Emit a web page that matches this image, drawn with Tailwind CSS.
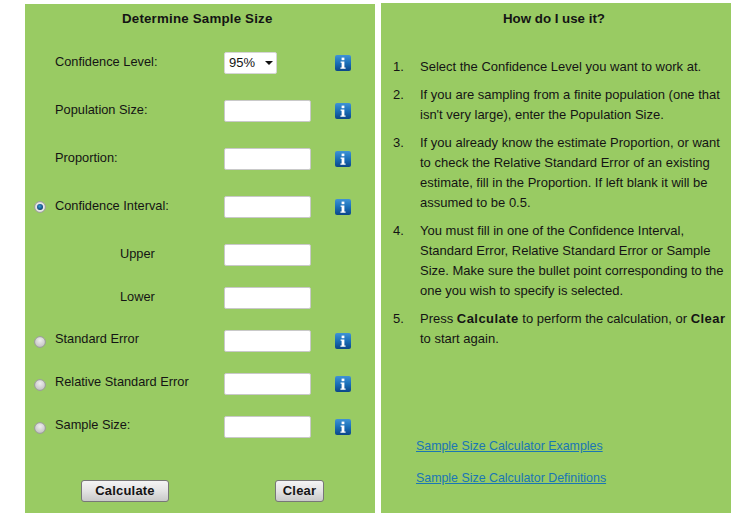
<!DOCTYPE html>
<html><head><meta charset="utf-8"><script src="https://cdn.jsdelivr.net/npm/@tailwindcss/browser@4"></script></head>
<body class="bg-white w-[756px] h-[525px] overflow-hidden font-['Liberation_Sans',Arial,sans-serif] text-[12.8px] text-[#141414]">
<svg class="absolute w-0 h-0"><defs>
<linearGradient id="ib" x1="0" y1="0" x2="0" y2="1"><stop offset="0" stop-color="#3f93d6"/><stop offset="0.5" stop-color="#1a6fb8"/><stop offset="1" stop-color="#0b4688"/></linearGradient>
<radialGradient id="rg" cx="0.5" cy="0.35" r="0.7"><stop offset="0" stop-color="#eeeeee"/><stop offset="1" stop-color="#bdbdbd"/></radialGradient>
<radialGradient id="rb" cx="0.45" cy="0.4" r="0.6"><stop offset="0" stop-color="#3a9ad8"/><stop offset="1" stop-color="#0b3f6e"/></radialGradient>
<symbol id="info" viewBox="0 0 16 16"><rect x="0" y="0" width="16" height="16" rx="2" fill="url(#ib)"/><rect x="6.6" y="2.6" width="2.8" height="2.6" fill="#fff"/><path d="M5.6 6.4h3.8v6h1.2v1.4H5.4v-1.4h1.2V7.8h-1z" fill="#fff"/></symbol>
<symbol id="off" viewBox="0 0 12 12"><circle cx="6" cy="6" r="5.4" fill="url(#rg)" stroke="#9a9a9a" stroke-width="1"/></symbol>
<symbol id="on" viewBox="0 0 12 12"><circle cx="6" cy="6" r="5.4" fill="#e6e6e6" stroke="#9a9a9a" stroke-width="1"/><circle cx="6" cy="6" r="3" fill="url(#rb)"/></symbol>
</defs></svg>

<div class="flex items-start">
  <form class="ml-[25px] mt-[4px] w-[350px] h-[509px] bg-[#99cb63] flex flex-col">
    <h2 class="h-[22px] pl-[97px] pt-[6px] font-bold text-[13.3px] leading-[18px] tracking-[0.2px]">Determine Sample Size</h2>

    <div class="mt-[26px] h-[22px] flex">
      <span class="w-[30px]"></span>
      <span class="w-[169px] leading-[19px]">Confidence Level:</span>
      <div class="w-[53px] h-[22px] bg-white border border-[#d5d5d5] rounded-[2px] pl-[4px] flex items-center text-[13px]">95%<svg class="ml-[10px]" width="8" height="4" viewBox="0 0 8 4"><path d="M0 0h8L4 4z" fill="#111"/></svg></div>
      <svg class="ml-[58px] mt-[3px]" width="16" height="16"><use href="#info"/></svg>
    </div>

    <div class="mt-[26px] h-[22px] flex">
      <span class="w-[30px]"></span>
      <span class="w-[169px] leading-[19px]">Population Size:</span>
      <div class="w-[87px] h-[22px] bg-white border border-[#c9c9c9] rounded-[2px]"></div>
      <svg class="ml-[24px] mt-[3px]" width="16" height="16"><use href="#info"/></svg>
    </div>

    <div class="mt-[26px] h-[22px] flex">
      <span class="w-[30px]"></span>
      <span class="w-[169px] leading-[19px]">Proportion:</span>
      <div class="w-[87px] h-[22px] bg-white border border-[#c9c9c9] rounded-[2px]"></div>
      <svg class="ml-[24px] mt-[3px]" width="16" height="16"><use href="#info"/></svg>
    </div>

    <div class="mt-[26px] h-[22px] flex">
      <span class="w-[30px] pl-[9px] pt-[5px]"><svg class="block" width="12" height="12"><use href="#on"/></svg></span>
      <span class="w-[169px] leading-[19px]">Confidence Interval:</span>
      <div class="w-[87px] h-[22px] bg-white border border-[#c9c9c9] rounded-[2px]"></div>
      <svg class="ml-[24px] mt-[3px]" width="16" height="16"><use href="#info"/></svg>
    </div>

    <div class="mt-[26px] h-[22px] flex">
      <span class="w-[199px] pl-[95px] leading-[19px]">Upper</span>
      <div class="w-[87px] h-[22px] bg-white border border-[#c9c9c9] rounded-[2px]"></div>
    </div>

    <div class="mt-[21px] h-[22px] flex">
      <span class="w-[199px] pl-[95px] leading-[19px]">Lower</span>
      <div class="w-[87px] h-[22px] bg-white border border-[#c9c9c9] rounded-[2px]"></div>
    </div>

    <div class="mt-[21px] h-[22px] flex">
      <span class="w-[30px] pl-[9px] pt-[6px]"><svg class="block" width="12" height="12"><use href="#off"/></svg></span>
      <span class="w-[169px] leading-[18px]">Standard Error</span>
      <div class="w-[87px] h-[22px] bg-white border border-[#c9c9c9] rounded-[2px]"></div>
      <svg class="ml-[24px] mt-[3px]" width="16" height="16"><use href="#info"/></svg>
    </div>

    <div class="mt-[21px] h-[22px] flex">
      <span class="w-[30px] pl-[9px] pt-[6px]"><svg class="block" width="12" height="12"><use href="#off"/></svg></span>
      <span class="w-[169px] leading-[18px]">Relative Standard Error</span>
      <div class="w-[87px] h-[22px] bg-white border border-[#c9c9c9] rounded-[2px]"></div>
      <svg class="ml-[24px] mt-[3px]" width="16" height="16"><use href="#info"/></svg>
    </div>

    <div class="mt-[21px] h-[22px] flex">
      <span class="w-[30px] pl-[9px] pt-[6px]"><svg class="block" width="12" height="12"><use href="#off"/></svg></span>
      <span class="w-[169px] leading-[18px]">Sample Size:</span>
      <div class="w-[87px] h-[22px] bg-white border border-[#c9c9c9] rounded-[2px]"></div>
      <svg class="ml-[24px] mt-[3px]" width="16" height="16"><use href="#info"/></svg>
    </div>

    <div class="mt-[42px] flex pl-[56px]">
      <button type="button" class="w-[88px] h-[22px] border border-[#777] rounded-[3px] bg-gradient-to-b from-[#f4f4f4] via-[#e3e3e3] to-[#c9c9c9] font-bold text-[13px] leading-[18px] tracking-[0.2px]">Calculate</button>
      <button type="button" class="ml-[106px] w-[49px] h-[22px] border border-[#777] rounded-[3px] bg-gradient-to-b from-[#f4f4f4] via-[#e3e3e3] to-[#c9c9c9] font-bold text-[13px] leading-[18px] tracking-[0.2px]">Clear</button>
    </div>
  </form>

  <section class="ml-[6px] mt-[3px] w-[350px] h-[510px] bg-[#99cb63] flex flex-col text-[13px]">
    <h2 class="pt-[7px] pr-[4px] text-center font-bold text-[13.3px] leading-[18px]">How do I use it?</h2>
    <ol class="mt-[29px] pl-[12px] pr-[4px] leading-[20px]">
      <li class="flex"><span class="w-[27px] shrink-0">1.</span><span>Select the Confidence Level you want to work at.</span></li>
      <li class="flex mt-[8px]"><span class="w-[27px] shrink-0">2.</span><span>If you are sampling from a finite population (one that isn't very large), enter the Population Size.</span></li>
      <li class="flex mt-[8px]"><span class="w-[27px] shrink-0">3.</span><span>If you already know the estimate Proportion, or want to check the Relative Standard Error of an existing estimate, fill in the Proportion. If left blank it will be assumed to be 0.5.</span></li>
      <li class="flex mt-[8px]"><span class="w-[27px] shrink-0">4.</span><span>You must fill in one of the Confidence Interval, Standard Error, Relative Standard Error or Sample Size. Make sure the bullet point corresponding to the one you wish to specify is selected.</span></li>
      <li class="flex mt-[8px]"><span class="w-[27px] shrink-0">5.</span><span>Press <b class="tracking-[0.45px]">Calculate</b> to perform the calculation, or <b class="tracking-[0.45px]">Clear</b> to start again.</span></li>
    </ol>
    <a href="#" class="mt-[87px] ml-[35px] text-[12.4px] text-[#1a76b4] underline leading-[20px]">Sample Size Calculator Examples</a>
    <a href="#" class="mt-[12px] ml-[35px] text-[12.4px] text-[#1a76b4] underline leading-[20px]">Sample Size Calculator Definitions</a>
  </section>
</div>
</body></html>
